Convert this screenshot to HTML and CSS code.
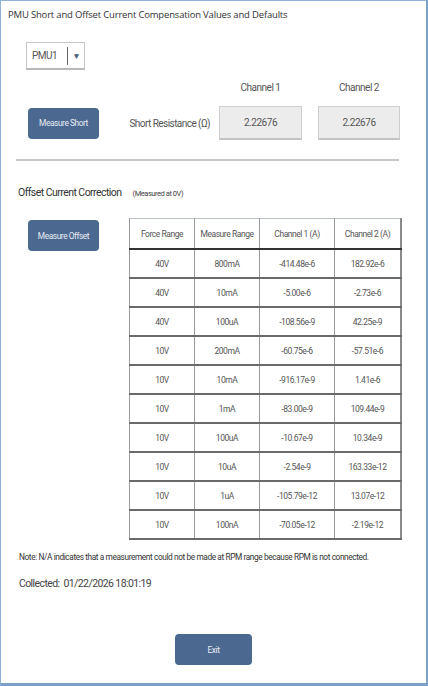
FILE: index.html
```html
<!DOCTYPE html>
<html lang="en">
<head>
    <meta charset="UTF-8">
    <meta name="viewport" content="width=device-width, initial-scale=1.0">
    <title>PMU Compensation</title>
    <link rel="stylesheet" href="styles.css">
</head>
<body>
    <div class="window">
        <h1 class="title">PMU Short and Offset Current Compensation Values and Defaults</h1>

        <div class="pmu-select">
            <span class="pmu-value">PMU1</span>
            <span class="pmu-sep"></span>
            <span class="pmu-arrow">&#9660;</span>
        </div>

        <div class="short-grid">
            <span></span>
            <span></span>
            <span class="chan-head">Channel 1</span>
            <span class="chan-head">Channel 2</span>

            <button class="btn">Measure Short</button>
            <span class="short-label">Short Resistance (&Omega;)</span>
            <div class="value-box">2.22676</div>
            <div class="value-box">2.22676</div>
        </div>

        <hr class="divider">

        <div class="offset-head">
            <span class="offset-title">Offset Current Correction</span>
            <span class="offset-note">(Measured at 0V)</span>
        </div>

        <div class="offset-body">
            <button class="btn">Measure Offset</button>
            <table class="offset-table">
                <thead>
                    <tr><th>Force Range</th><th>Measure Range</th><th>Channel 1 (A)</th><th>Channel 2 (A)</th></tr>
                </thead>
                <tbody>
                    <tr><td>40V</td><td>800mA</td><td>-414.48e-6</td><td>182.92e-6</td></tr>
                    <tr><td>40V</td><td>10mA</td><td>-5.00e-6</td><td>-2.73e-6</td></tr>
                    <tr><td>40V</td><td>100uA</td><td>-108.56e-9</td><td>42.25e-9</td></tr>
                    <tr><td>10V</td><td>200mA</td><td>-60.75e-6</td><td>-57.51e-6</td></tr>
                    <tr><td>10V</td><td>10mA</td><td>-916.17e-9</td><td>1.41e-6</td></tr>
                    <tr><td>10V</td><td>1mA</td><td>-83.00e-9</td><td>109.44e-9</td></tr>
                    <tr><td>10V</td><td>100uA</td><td>-10.67e-9</td><td>10.34e-9</td></tr>
                    <tr><td>10V</td><td>10uA</td><td>-2.54e-9</td><td>163.33e-12</td></tr>
                    <tr><td>10V</td><td>1uA</td><td>-105.79e-12</td><td>13.07e-12</td></tr>
                    <tr><td>10V</td><td>100nA</td><td>-70.05e-12</td><td>-2.19e-12</td></tr>
                </tbody>
            </table>
        </div>

        <p class="note">Note: N/A indicates that a measurement could not be made at RPM range because RPM is not connected.</p>
        <p class="collected">Collected:&nbsp; 01/22/2026 18:01:19</p>

        <div class="footer">
            <button class="btn btn-exit">Exit</button>
        </div>
    </div>
</body>
</html>
```

FILE: styles.css
```css
html, body {
    margin: 0;
    padding: 0;
    background: #ffffff;
}
body {
    font-family: Roboto, "Liberation Sans", sans-serif;
    color: #444;
}
.window {
    box-sizing: border-box;
    width: 428px;
    height: 686px;
    border: 1px solid #8fb2d6;
    border-right: 2px solid #7aa0c8;
    border-bottom: 3px solid #7aa0c8;
    background: #fff;
    overflow: hidden;
}
.title {
    margin: 0;
    padding: 7px 0 0 7px;
    font-family: "Open Sans", sans-serif;
    font-size: 9.5px;
    font-weight: normal;
    letter-spacing: -0.18px;
    line-height: 13px;
    color: #333;
}

/* PMU picker */
.pmu-select {
    box-sizing: border-box;
    display: flex;
    align-items: center;
    width: 59px;
    height: 28px;
    margin: 21px 0 0 25px;
    border: 1px solid #c6c6c6;
    border-bottom: 2px solid #b8b8b8;
    background: #fff;
}
.pmu-value {
    font-size: 10px;
    letter-spacing: -0.5px;
    margin-left: 5px;
    color: #555;
}
.pmu-sep {
    width: 1px;
    height: 18px;
    background: #666;
    margin-left: 10px;
}
.pmu-arrow {
    font-size: 8.5px;
    color: #4a5b78;
    margin-left: 4px;
}

/* short resistance block */
.short-grid {
    display: grid;
    grid-template-columns: 71px 1fr 83px 82px;
    column-gap: 16px;
    row-gap: 12px;
    align-items: center;
    margin: 11px 26px 0 27px;
}
.chan-head {
    text-align: center;
    font-size: 10px;
    letter-spacing: -0.5px;
    color: #555;
    line-height: 13px;
}
.short-label {
    justify-self: end;
    margin-right: -7px;
    font-size: 10px;
    letter-spacing: -0.55px;
    color: #555;
}
.value-box {
    box-sizing: border-box;
    height: 34px;
    line-height: 32px;
    text-align: center;
    background: #ececec;
    border: 1px solid #cfcfcf;
    border-bottom: 2px solid #c4c4c4;
    font-size: 10px;
    letter-spacing: -0.45px;
    color: #555;
}
.btn {
    box-sizing: border-box;
    height: 31px;
    padding: 0;
    border: none;
    border-radius: 4px;
    background: #4b6891;
    color: #e8ecf3;
    font-family: Roboto, "Liberation Sans", sans-serif;
    font-size: 8.4px;
    letter-spacing: -0.45px;
    cursor: pointer;
}
.short-grid .btn {
    width: 71px;
}

.divider {
    margin: 19px 27px 0 15px;
    border: none;
    height: 2px;
    background: #c7c7c7;
}

/* offset current block */
.offset-head {
    display: flex;
    align-items: baseline;
    margin: 25px 0 0 17px;
}
.offset-title {
    font-size: 10.5px;
    letter-spacing: -0.55px;
    color: #333;
}
.offset-note {
    margin-left: 11px;
    font-size: 7.5px;
    letter-spacing: -0.45px;
    color: #444;
}
.offset-body {
    display: flex;
    align-items: flex-start;
    margin: 19px 0 0 27px;
}
.offset-body .btn {
    width: 71px;
    margin-top: 2px;
}
.offset-table {
    margin-left: 30px;
    width: 273px;
    border-collapse: collapse;
    border-top: 1px solid #b9c2cc;
    border-left: 1px solid #999;
    border-right: 2px solid #8a8a8a;
    border-bottom: 2px solid #777;
    font-size: 8.5px;
    letter-spacing: -0.45px;
    color: #555;
}
.offset-table th,
.offset-table td {
    height: 27px;
    padding: 0;
    text-align: center;
    font-weight: normal;
    border-left: 1px solid #9a9a9a;
    border-bottom: 2px solid #6a6a6a;
}
.offset-table th {
    height: 29px;
    border-bottom: 2px solid #333;
}
.offset-table th:nth-child(1) { width: 64px; }
.offset-table th:nth-child(2) { width: 64px; }
.offset-table th:nth-child(3) { width: 74px; }

.note {
    margin: 12px 0 0 18px;
    font-size: 8.3px;
    letter-spacing: -0.4px;
    color: #333;
}
.collected {
    margin: 15px 0 0 18px;
    font-size: 10.5px;
    letter-spacing: -0.6px;
    color: #444;
}
.footer {
    display: flex;
    justify-content: center;
    margin-top: 44px;
}
.btn-exit {
    width: 77px;
    height: 31px;
}
```
